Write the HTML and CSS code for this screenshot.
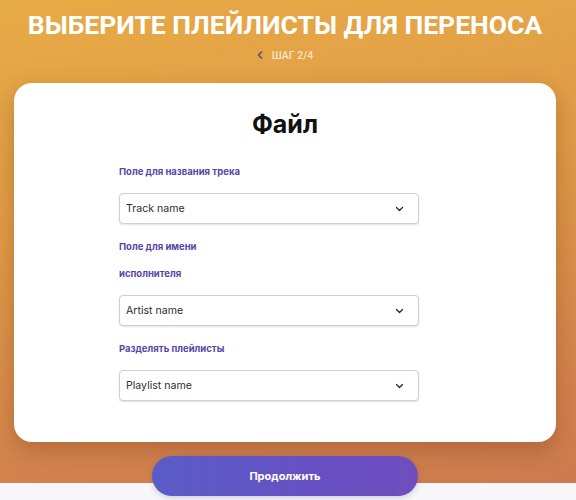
FILE: index.html
```html
<!DOCTYPE html>
<html lang="ru">
<head>
<meta charset="utf-8">
<title>Выберите плейлисты</title>
<link rel="stylesheet" href="styles.css">
</head>
<body>
<div class="page">
  <header class="head">
    <h1 class="head-title">ВЫБЕРИТЕ ПЛЕЙЛИСТЫ ДЛЯ ПЕРЕНОСА</h1>
    <div class="step">
      <svg class="step-back" width="6" height="8" viewBox="0 0 6 8"><path d="M4.5 1 L1.5 4 L4.5 7" fill="none" stroke="#5b4a8e" stroke-width="1.6" stroke-linecap="round" stroke-linejoin="round"/></svg>
      <span class="step-text">ШАГ 2/4</span>
    </div>
  </header>
  <main class="card">
    <h2 class="card-title">Файл</h2>
    <div class="form">
      <div class="field">
        <label class="field-label">Поле для названия трека</label>
        <div class="select"><span>Track name</span><svg width="9" height="6" viewBox="0 0 9 6"><path d="M1.5 1.5 L4.5 4.5 L7.5 1.5" fill="none" stroke="#222" stroke-width="1.2" stroke-linecap="round" stroke-linejoin="round"/></svg></div>
      </div>
      <div class="field">
        <label class="field-label">Поле для имени исполнителя</label>
        <div class="select"><span>Artist name</span><svg width="9" height="6" viewBox="0 0 9 6"><path d="M1.5 1.5 L4.5 4.5 L7.5 1.5" fill="none" stroke="#222" stroke-width="1.2" stroke-linecap="round" stroke-linejoin="round"/></svg></div>
      </div>
      <div class="field">
        <label class="field-label">Разделять плейлисты</label>
        <div class="select"><span>Playlist name</span><svg width="9" height="6" viewBox="0 0 9 6"><path d="M1.5 1.5 L4.5 4.5 L7.5 1.5" fill="none" stroke="#222" stroke-width="1.2" stroke-linecap="round" stroke-linejoin="round"/></svg></div>
      </div>
    </div>
  </main>
  <div class="actions">
    <button class="btn">Продолжить</button>
  </div>
</div>
</body>
</html>
```
FILE: styles.css
```css
* { box-sizing: border-box; }
html, body { margin: 0; padding: 0; }
body {
  width: 576px;
  height: 500px;
  overflow: hidden;
  font-family: "Inter", "Noto Sans", sans-serif;
  background:
    linear-gradient(to bottom, transparent 483px, #f7f7fa 483px),
    linear-gradient(170deg, #e7ab46 0%, #e09a47 40%, #d3824d 80%, #cc784f 100%);
}
.page {
  width: 570px;
  display: flex;
  flex-direction: column;
  align-items: center;
}
.head {
  display: flex;
  flex-direction: column;
  align-items: center;
  padding-top: 9px;
}
.head-title {
  margin: 0;
  font-family: "Roboto", "Liberation Sans", sans-serif;
  font-weight: 700;
  font-size: 26.5px;
  line-height: 32px;
  color: #fff;
  letter-spacing: 0;
}
.step {
  display: flex;
  align-items: center;
  gap: 9px;
  margin-top: 7px;
  height: 14px;
}
.step-back { display: block; }
.step-text {
  font-family: "Roboto", "Liberation Sans", sans-serif;
  font-size: 10.5px;
  font-weight: 500;
  color: #f8e7c6;
}
.card {
  margin-top: 21px;
  width: 542px;
  height: 359px;
  background: #fff;
  border-radius: 18px;
  box-shadow: 0 8px 22px rgba(90, 40, 10, 0.28);
  padding-top: 24px;
  display: flex;
  flex-direction: column;
}
.card-title {
  margin: 0;
  text-align: center;
  font-family: "Inter", "Noto Sans", sans-serif;
  font-weight: 700;
  font-size: 25px;
  line-height: 34px;
  color: #111;
}
.form {
  margin-left: 105px;
  width: 300px;
  margin-top: 17px;
  display: flex;
  flex-direction: column;
  gap: 9px;
}
.field {
  display: flex;
  flex-direction: column;
  gap: 8px;
}
.field-label {
  max-width: 130px;
  font-family: "Inter", "Noto Sans", sans-serif;
  font-size: 9.5px;
  font-weight: 700;
  line-height: 27px;
  color: #5745a8;
}
.select {
  height: 31px;
  border: 1px solid #cfcfd4;
  border-radius: 4px;
  box-shadow: 0 1px 2px rgba(0,0,0,0.12);
  display: flex;
  align-items: center;
  justify-content: space-between;
  padding: 0 14px 0 6px;
  font-family: "Inter", "Noto Sans", sans-serif;
  font-size: 10.6px;
  color: #2e2e2e;
  background: #fff;
}
.select svg { display: block; }
.actions {
  margin-top: 14px;
  display: flex;
  justify-content: center;
}
.btn {
  width: 266px;
  height: 40px;
  border: 0;
  border-radius: 20px;
  background: linear-gradient(90deg, #5a5cc8 0%, #6650c2 60%, #6f4dbf 100%);
  color: #fff;
  font-family: "Inter", "Noto Sans", sans-serif;
  font-weight: 700;
  font-size: 11px;
  box-shadow: 0 2px 6px rgba(60, 40, 120, 0.2);
}
```
